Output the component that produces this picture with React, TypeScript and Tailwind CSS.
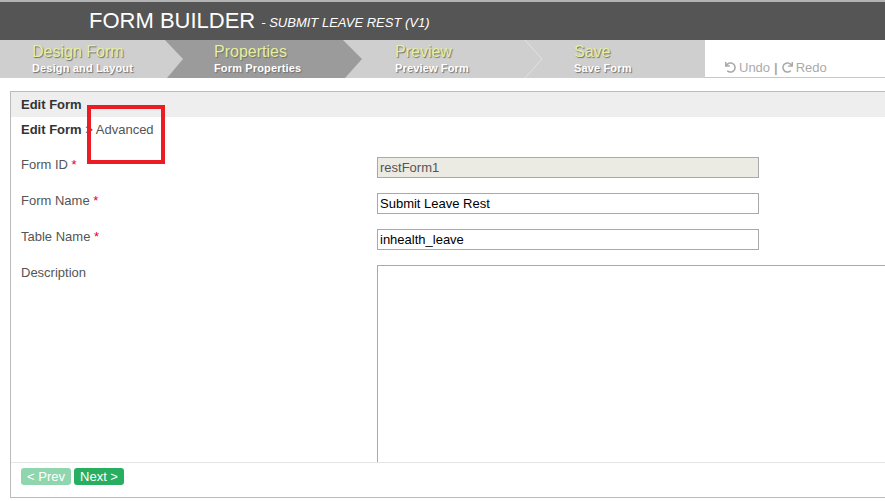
import { FaUndo, FaRedo } from "react-icons/fa";

type Step = {
  title: string;
  sub: string;
  width: string;
  pad: string;
};

const steps: Step[] = [
  { title: "Design Form", sub: "Design and Layout", width: "w-[165px]", pad: "pl-[32px]" },
  { title: "Properties", sub: "Form Properties", width: "w-[197px]", pad: "pl-[49px]" },
  { title: "Preview", sub: "Preview Form", width: "w-[178px]", pad: "pl-[33px]" },
  { title: "Save", sub: "Save Form", width: "w-[165px]", pad: "pl-[34px]" },
];

function Field({
  label,
  required,
  children,
}: {
  label: string;
  required?: boolean;
  children: React.ReactNode;
}) {
  return (
    <div className="flex items-start">
      <div className="w-[356px] shrink-0 pt-[1px] text-[13px] leading-[16px] text-[#555]">
        {label}
        {required && <span className="text-[#e4002b]"> *</span>}
      </div>
      <div className="mt-[1px]">{children}</div>
    </div>
  );
}

const inputCls =
  "block w-[382px] h-[21px] border border-[#a9a9a9] px-[2px] text-[13px] leading-[19px] outline-none";

export default function App() {
  return (
    <div className="w-[885px] h-[501px] overflow-hidden bg-white font-['Liberation_Sans',Arial,sans-serif]">
      {/* title bar */}
      <div className="h-[40px] border-t-2 border-[#b3b3b3] bg-[#555555] flex items-center pl-[89px] whitespace-nowrap">
        <span className="text-[22px] leading-none text-white">FORM BUILDER</span>
        <span className="ml-[6px] mt-[4px] text-[13px] italic text-white">- SUBMIT LEAVE REST (V1)</span>
      </div>

      {/* wizard steps */}
      <div className="flex h-[38px]">
        <div className="relative flex w-[705px] bg-[#cfcfcf]">
          <div className="absolute left-[165px] top-0 h-full w-[197px] bg-[#9b9b9b] [clip-path:polygon(0_0,178px_0,197px_50%,180px_100%,2px_100%,18px_50%)]" />
          <svg className="absolute left-[520px] top-0" width="24" height="38" viewBox="0 0 24 38">
            <polyline points="5,0 22,19 5,38" fill="none" stroke="#e2e2e2" strokeWidth="1" />
          </svg>
          {steps.map((s) => (
            <div key={s.title} className={`relative ${s.width} ${s.pad} pt-[4px] whitespace-nowrap`}>
              <div className="text-[16px] leading-[16px] text-[#e6f09c] [text-shadow:1px_1px_1px_#6e6e6e]">
                {s.title}
              </div>
              <div className="mt-[2px] text-[11px] leading-[12px] font-bold tracking-[0.15px] text-white [text-shadow:1px_1px_1px_#6e6e6e]">
                {s.sub}
              </div>
            </div>
          ))}
        </div>
        <div className="flex flex-1 items-end border-b border-[#c8c8c8] pl-[20px] pb-[1px] text-[13px] leading-[16px] text-[#aaaaaa] whitespace-nowrap">
          <FaUndo className="w-[11px] h-[11px] mb-[3px] mr-[3px]" />
          <span>Undo</span>
          <span className="mx-[4px] font-bold">|</span>
          <FaRedo className="w-[11px] h-[11px] mb-[3px] mr-[3px]" />
          <span>Redo</span>
        </div>
      </div>

      {/* edit panel */}
      <div className="relative mt-[13px] ml-[10px] w-[900px] border border-r-0 border-[#bbbbbb]">
        <div className="h-[25px] bg-[#eeeeee] flex items-center pl-[10px] text-[13px] font-bold text-[#333]">
          Edit Form
        </div>
        <div className="mt-[5px] pl-[10px] text-[13px] leading-[16px] text-[#555]">
          <span className="font-bold text-[#333]">Edit Form</span> &gt; Advanced
        </div>
        <div className="absolute left-[76px] top-[13px] w-[78px] h-[59px] border-4 border-[#ec1c24]" />

        <div className="mt-[18px] pl-[10px] flex flex-col gap-[14px]">
          <Field label="Form ID" required>
            <input readOnly value="restForm1" className={`${inputCls} bg-[#ebebe4] text-[#545454]`} />
          </Field>
          <Field label="Form Name" required>
            <input readOnly value="Submit Leave Rest" className={`${inputCls} bg-white text-black`} />
          </Field>
          <Field label="Table Name" required>
            <input readOnly value="inhealth_leave" className={`${inputCls} bg-white text-black`} />
          </Field>
          <Field label="Description">
            <textarea
              readOnly
              className="block w-[520px] h-[197px] border border-b-0 border-[#a9a9a9] resize-none outline-none"
            />
          </Field>
        </div>

        <div className="h-[35px] border-t border-[#e5e5e5] pt-[5px] pl-[10px] flex items-start gap-[3px]">
          <button className="h-[17px] w-[50px] rounded-[3px] bg-[#8fd6ae] text-[13px] leading-[17px] text-white">
            &lt; Prev
          </button>
          <button className="h-[17px] w-[50px] rounded-[3px] bg-[#27ae60] text-[13px] leading-[17px] text-white">
            Next &gt;
          </button>
        </div>
      </div>
    </div>
  );
}
